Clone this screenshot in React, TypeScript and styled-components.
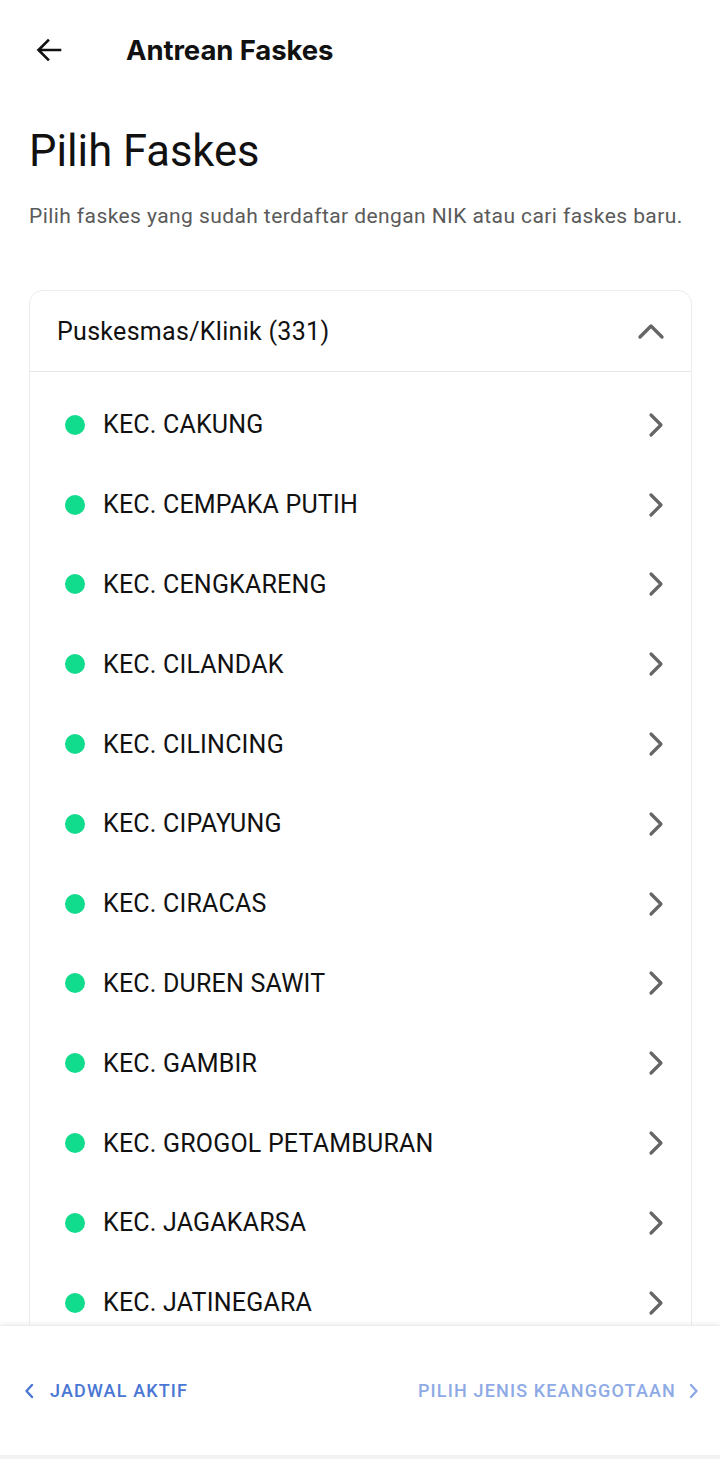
import React from "react";
import styled, { createGlobalStyle } from "styled-components";

const Global = createGlobalStyle`
  html, body { margin: 0; padding: 0; background: #fff; }
  body { font-family: Roboto, "Liberation Sans", sans-serif; color: #111; }
  * { box-sizing: border-box; }
`;

const Page = styled.div`
  width: 720px;
  height: 1459px;
  display: flex;
  flex-direction: column;
  background: #fff;
  overflow: hidden;
`;

const TopBar = styled.header`
  height: 100px;
  display: flex;
  align-items: center;
  padding: 0 0 0 34px;
  flex-shrink: 0;
`;

const BackButton = styled.button`
  border: 0;
  background: none;
  padding: 0;
  width: 30px;
  height: 30px;
  display: flex;
  align-items: center;
  justify-content: center;
  margin-right: 62px;
  color: #111;
`;

const TopTitle = styled.h1`
  margin: 0;
  font-family: Inter, "Open Sans", sans-serif;
  font-weight: 700;
  font-size: 27.5px;
  letter-spacing: -0.1px;
  color: #111;
`;

const Scroll = styled.main`
  flex: 1;
  overflow: hidden;
  padding: 0 28px 0 29px;
`;

const Heading = styled.h2`
  margin: 24px 0 0;
  font-weight: 400;
  font-size: 43.5px;
  line-height: 56px;
  color: #111;
`;

const Sub = styled.p`
  margin: 22px 0 0;
  font-size: 21px;
  line-height: 28px;
  letter-spacing: 0.42px;
  color: #5a5a5a;
  white-space: nowrap;
`;

const Card = styled.section`
  margin-top: 60px;
  border: 1px solid #ececec;
  border-radius: 14px;
  overflow: hidden;
`;

const CardHead = styled.div`
  height: 81px;
  display: flex;
  align-items: center;
  justify-content: space-between;
  padding: 0 26px 0 27px;
  border-bottom: 1px solid #e6e6e6;
  font-size: 25px;
  letter-spacing: 0.3px;
  color: #111;
`;

const List = styled.ul`
  list-style: none;
  margin: 0;
  padding: 13px 0 0;
`;

const Row = styled.li`
  height: 79.8px;
  display: flex;
  align-items: center;
  padding: 0 27px 0 35px;
`;

const Dot = styled.span`
  width: 20px;
  height: 20px;
  border-radius: 50%;
  background: #11db8d;
  flex-shrink: 0;
  margin-right: 18px;
`;

const RowLabel = styled.span`
  flex: 1;
  font-size: 25px;
  letter-spacing: 0.2px;
  color: #111;
`;

const BottomBar = styled.footer`
  height: 130px;
  flex-shrink: 0;
  display: flex;
  align-items: center;
  justify-content: space-between;
  padding: 0 21px 0 24px;
  background: #fff;
  box-shadow: 0 -2px 4px rgba(0, 0, 0, 0.06);
  border-top: 1px solid #ededed;
  position: relative;
  z-index: 1;
`;

const NavBtn = styled.button<{ $muted?: boolean }>`
  border: 0;
  background: none;
  padding: 0;
  display: flex;
  align-items: center;
  gap: ${(p) => (p.$muted ? "13px" : "16px")};
  font-family: Roboto, "Liberation Sans", sans-serif;
  font-weight: 500;
  font-size: 18px;
  letter-spacing: 1.15px;
  color: ${(p) => (p.$muted ? "#8eaae6" : "#4a76d4")};
`;

const BottomStrip = styled.div`
  height: 4px;
  background: #f2f2f2;
  flex-shrink: 0;
`;

const ArrowLeft = () => (
  <svg width="30" height="30" viewBox="0 0 30 30" fill="none">
    <path d="M26 15H5M14 5.5L4.5 15L14 24.5" stroke="#111" strokeWidth="2.6" strokeLinecap="square" />
  </svg>
);

const ChevronUp = () => (
  <svg width="28" height="18" viewBox="0 0 28 18" fill="none">
    <path d="M3 15L14 4L25 15" stroke="#666" strokeWidth="3.4" strokeLinecap="round" strokeLinejoin="round" />
  </svg>
);

const ChevronRight = () => (
  <svg width="16" height="26" viewBox="0 0 16 26" fill="none">
    <path d="M3 3L13 13L3 23" stroke="#666" strokeWidth="3.2" strokeLinecap="round" strokeLinejoin="round" />
  </svg>
);

const SmallChevron = ({ dir, color }: { dir: "l" | "r"; color: string }) => (
  <svg width="10" height="16" viewBox="0 0 10 16" fill="none">
    <path
      d={dir === "l" ? "M8 2L2.5 8L8 14" : "M2 2L7.5 8L2 14"}
      stroke={color}
      strokeWidth="2.4"
      strokeLinecap="round"
      strokeLinejoin="round"
    />
  </svg>
);

const items = [
  "KEC. CAKUNG",
  "KEC. CEMPAKA PUTIH",
  "KEC. CENGKARENG",
  "KEC. CILANDAK",
  "KEC. CILINCING",
  "KEC. CIPAYUNG",
  "KEC. CIRACAS",
  "KEC. DUREN SAWIT",
  "KEC. GAMBIR",
  "KEC. GROGOL PETAMBURAN",
  "KEC. JAGAKARSA",
  "KEC. JATINEGARA",
];

export default function App() {
  return (
    <Page>
      <Global />
      <TopBar>
        <BackButton aria-label="Kembali">
          <ArrowLeft />
        </BackButton>
        <TopTitle>Antrean Faskes</TopTitle>
      </TopBar>
      <Scroll>
        <Heading>Pilih Faskes</Heading>
        <Sub>Pilih faskes yang sudah terdaftar dengan NIK atau cari faskes baru.</Sub>
        <Card>
          <CardHead>
            <span>Puskesmas/Klinik (331)</span>
            <ChevronUp />
          </CardHead>
          <List>
            {items.map((name) => (
              <Row key={name}>
                <Dot />
                <RowLabel>{name}</RowLabel>
                <ChevronRight />
              </Row>
            ))}
          </List>
        </Card>
      </Scroll>
      <BottomBar>
        <NavBtn>
          <SmallChevron dir="l" color="#4a76d4" />
          JADWAL AKTIF
        </NavBtn>
        <NavBtn $muted>
          PILIH JENIS KEANGGOTAAN
          <SmallChevron dir="r" color="#8eaae6" />
        </NavBtn>
      </BottomBar>
      <BottomStrip />
    </Page>
  );
}
